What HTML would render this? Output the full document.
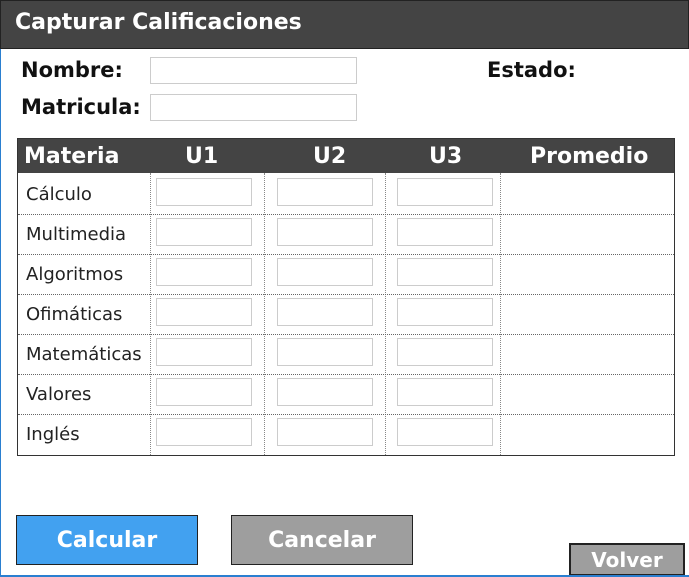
<!DOCTYPE html>
<html><head><style>
*{margin:0;padding:0;box-sizing:border-box}
body{width:689px;height:577px;background:#fff;position:relative;overflow:hidden;font-family:"DejaVu Sans","Liberation Sans",sans-serif}
.a{position:absolute;white-space:nowrap}
.title{left:0;top:0;width:689px;height:49px;background:#444;border:1px solid #222;color:#fff;font-weight:bold;font-size:22px;padding:9px 0 0 14px}
.lb{font-weight:bold;font-size:21px;color:#111}
.in{background:#fff;border:1px solid #ccc}
.tbl{left:17px;top:138px;width:658px;height:318px;border:1px solid #333}
.hd{left:0;top:0;width:656px;height:34px;background:#444;color:#fff;font-weight:bold;font-size:22px}
.hd span{position:absolute;top:5px}
.row{font-size:18px;color:#222}
.hl{left:0;width:656px;border-top:1px dotted #666}
.vl{top:34px;height:282px;border-left:1px dotted #888}
.btn{color:#fff;font-weight:bold;font-size:22px;text-align:center;border:1px solid #222}
</style></head><body>
<div class="a" style="left:0;top:0;width:1px;height:577px;background:#2a7fd0"></div>
<div class="a title">Capturar Calificaciones</div>
<div class="a lb" style="left:21px;top:58px">Nombre:</div>
<div class="a lb" style="left:21px;top:95px">Matricula:</div>
<div class="a lb" style="left:487px;top:58px">Estado:</div>
<div class="a in" style="left:150px;top:57px;width:207px;height:27px"></div>
<div class="a in" style="left:150px;top:94px;width:207px;height:27px"></div>
<div class="a tbl">
<div class="a hd"><span style="left:6px">Materia</span><span style="left:167px">U1</span><span style="left:295px">U2</span><span style="left:411px">U3</span><span style="left:512px">Promedio</span></div>
<div class="a vl" style="left:132px"></div><div class="a vl" style="left:246px"></div><div class="a vl" style="left:367px"></div><div class="a vl" style="left:482px"></div>
<div class="a hl" style="top:75px"></div><div class="a hl" style="top:115px"></div><div class="a hl" style="top:155px"></div><div class="a hl" style="top:195px"></div><div class="a hl" style="top:235px"></div><div class="a hl" style="top:275px"></div>
</div>
<div id="rows"></div>
<script>
var n=["Cálculo","Multimedia","Algoritmos","Ofimáticas","Matemáticas","Valores","Inglés"],h="";
for(var i=0;i<7;i++){var t=178+i*40;
h+='<div class="a row" style="left:26px;top:'+(t+6)+'px">'+n[i]+'</div>';
[156,277,397].forEach(function(x){h+='<div class="a in" style="left:'+x+'px;top:'+t+'px;width:96px;height:28px"></div>'});}
document.getElementById("rows").innerHTML=h;
</script>
<div class="a btn" style="left:16px;top:515px;width:182px;height:50px;background:#42a1f0;padding-top:12px">Calcular</div>
<div class="a btn" style="left:231px;top:515px;width:182px;height:50px;background:#9e9e9e;padding-top:12px">Cancelar</div>
<div class="a btn" style="left:569px;top:543px;width:116px;height:33px;background:#9e9e9e;font-size:20px;padding-top:3px;border-width:2px">Volver</div>
<div class="a" style="left:0;top:575px;width:689px;height:2px;background:#2a7fd0"></div>
</body></html>
